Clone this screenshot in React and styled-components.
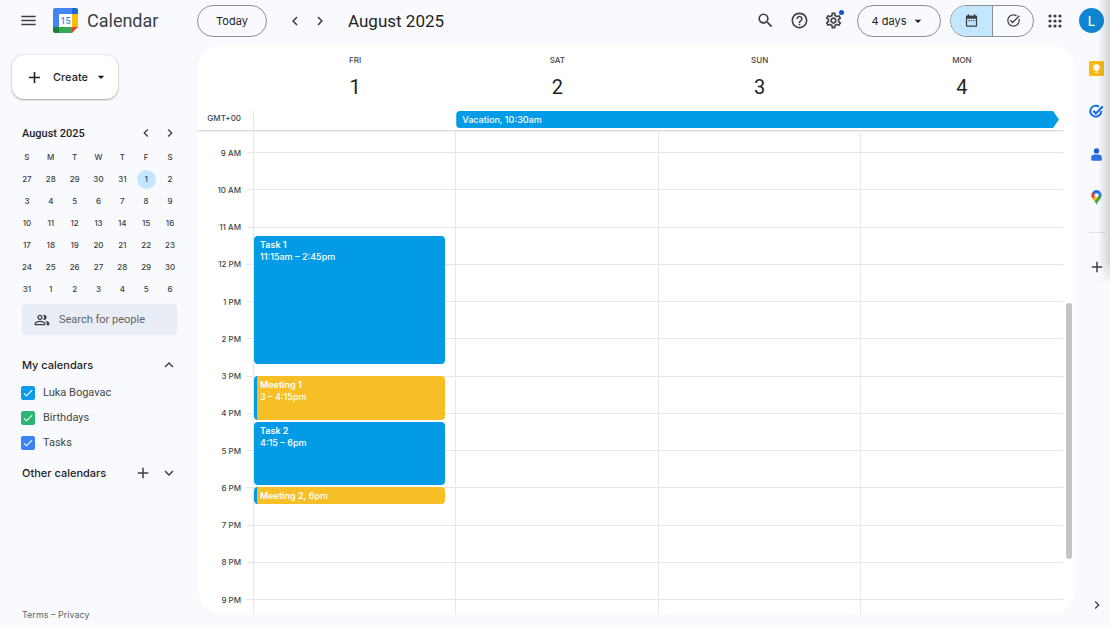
import React, { useState } from "react";
import styled, { createGlobalStyle } from "styled-components";
import {
    MdAdd,
    MdArrowDropDown,
    MdCheck,
    MdChevronLeft,
    MdChevronRight,
    MdDateRange,
    MdExpandLess,
    MdExpandMore,
    MdHelpOutline,
    MdMenu,
    MdOutlinePeopleAlt,
    MdOutlineSettings,
    MdSearch,
    MdTaskAlt,
} from "react-icons/md";

const GlobalStyle = createGlobalStyle`
    * {
        box-sizing: border-box;
    }

    body {
        margin: 0;
        background-color: #f8fafd;
        color: #1f1f1f;
        font-family: Inter, Roboto, "Liberation Sans", sans-serif;
        font-size: 11px;
    }

    button,
    input {
        font: inherit;
        color: inherit;
    }
`;

const Page = styled.div`
    position: relative;
    display: flex;
    flex-direction: column;
    min-height: 100vh;
`;

const Header = styled.header`
    display: flex;
    align-items: center;
    height: 45px;
    padding: 0 6px 4px 0;
`;

const Brand = styled.div`
    display: flex;
    align-items: center;
    width: 197px;
    padding-left: 18px;
`;

const Logo = styled.span`
    display: flex;
    margin-left: 15px;
`;

const BrandName = styled.span`
    margin-left: 9px;
    font-family: Roboto, sans-serif;
    font-size: 18px;
    color: #3c4043;
`;

const IconButton = styled.button`
    display: flex;
    align-items: center;
    justify-content: center;
    flex: none;
    width: ${(props) => props.$size || 24}px;
    height: ${(props) => props.$size || 24}px;
    padding: 0;
    border: none;
    border-radius: 50%;
    background: none;
    color: #3c4043;
    cursor: pointer;

    &:hover {
        background-color: rgba(60, 64, 67, 0.08);
    }
`;

const PillButton = styled.button`
    display: flex;
    align-items: center;
    justify-content: center;
    gap: 4px;
    height: 32px;
    min-width: ${(props) => props.$width}px;
    padding: 0;
    border: 1px solid #8e918f;
    border-radius: 16px;
    background: none;
    cursor: pointer;
`;

const Arrows = styled.div`
    display: flex;
    gap: 1px;
    margin: 0 16px;
`;

const PeriodTitle = styled.h1`
    flex: 1;
    margin: 0;
    font-family: Roboto, sans-serif;
    font-size: 17px;
    font-weight: 400;
`;

const Tools = styled.div`
    display: flex;
    align-items: center;
    gap: 10px;
    margin-right: 12px;
`;

const SettingsButton = styled(IconButton)`
    position: relative;

    &::after {
        content: "";
        position: absolute;
        top: 1px;
        right: 1px;
        width: 5px;
        height: 5px;
        border-radius: 50%;
        background-color: #0b57d0;
    }
`;

const ViewSwitch = styled.div`
    display: flex;
    height: 32px;
    margin: 0 9px;
    border: 1px solid #8e918f;
    border-radius: 16px;
    overflow: hidden;
`;

const ViewOption = styled.button`
    display: flex;
    align-items: center;
    justify-content: center;
    width: 41px;
    padding: 0;
    border: none;
    background-color: ${(props) => (props.$active ? "#c2e7ff" : "transparent")};
    color: #3c4043;
    cursor: pointer;

    & + & {
        border-left: 1px solid #8e918f;
    }
`;

const Avatar = styled.button`
    width: 25px;
    height: 25px;
    margin-left: 12px;
    padding: 0;
    border: none;
    border-radius: 50%;
    background-color: #0f85d1;
    color: white;
    font-size: 13px;
    font-weight: 500;
    cursor: pointer;
`;

const Content = styled.div`
    display: flex;
    flex: 1;
`;

const Sidebar = styled.aside`
    display: flex;
    flex-direction: column;
    flex: none;
    width: 198px;
    padding: 10px 21px 7px 22px;
`;

const CreateButton = styled.button`
    display: flex;
    align-items: center;
    align-self: flex-start;
    height: 44px;
    width: 106px;
    margin: 0 0 24px -10px;
    padding: 0 9px 0 13px;
    border: none;
    border-radius: 12px;
    background-color: white;
    box-shadow: 0 1px 2px rgba(60, 64, 67, 0.4), 0 0 2px rgba(60, 64, 67, 0.2);
    font-weight: 500;
    cursor: pointer;

    & span {
        flex: 1;
        margin-left: 9px;
        text-align: left;
    }
`;

const MiniHeader = styled.div`
    display: flex;
    align-items: center;
    height: 20px;
    margin-right: -5px;

    & h2 {
        flex: 1;
        margin: 0;
        font-family: Roboto, sans-serif;
        font-size: 11px;
        font-weight: 500;
    }
`;

const MiniTable = styled.table`
    width: 167px;
    margin: 3px 0 4px -7px;
    border-collapse: collapse;
    table-layout: fixed;
    font-size: 8px;
    text-align: center;
    color: #3c4043;

    & th,
    & td {
        height: 22px;
        padding: 0;
        font-weight: 500;
    }
`;

const MiniDay = styled.button`
    display: block;
    width: 19px;
    height: 19px;
    margin: 0 auto;
    padding: 0;
    border: none;
    border-radius: 50%;
    background-color: ${(props) => (props.$today ? "#c2e7ff" : "transparent")};
    color: ${(props) => (props.$today ? "#004a77" : "inherit")};
    font-weight: 500;
    cursor: pointer;
`;

const PeopleSearch = styled.label`
    display: flex;
    align-items: center;
    gap: 9px;
    height: 31px;
    padding: 0 12px;
    border-radius: 3px;
    background-color: #e9eef6;
    color: #3c4043;

    & svg {
        flex: none;
    }

    & input {
        width: 100%;
        min-width: 0;
        padding: 0;
        border: none;
        outline: none;
        background: none;
        font-family: Roboto, sans-serif;
    }

    & input::placeholder {
        color: #5f6368;
        opacity: 1;
    }
`;

const SectionHeader = styled.div`
    display: flex;
    align-items: center;
    gap: 2px;
    height: 24px;
    margin-top: ${(props) => props.$top}px;
    margin-right: -4px;

    & h2 {
        flex: 1;
        margin: 0;
        font-size: 11px;
        font-weight: 500;
    }
`;

const CalendarList = styled.div`
    padding-top: 3px;
`;

const CalendarItem = styled.label`
    display: flex;
    align-items: center;
    gap: 8px;
    height: 25px;
    margin-left: -1px;
    font-family: Roboto, sans-serif;
    color: #444746;
    cursor: pointer;
`;

const CheckWrap = styled.span`
    display: grid;
    place-items: center;
    width: 14px;
    height: 14px;

    & > * {
        grid-area: 1 / 1;
    }

    & input {
        appearance: none;
        width: 14px;
        height: 14px;
        margin: 0;
        border: 1px solid ${(props) => props.$color};
        border-radius: 2px;
    }

    & input:checked {
        background-color: ${(props) => props.$color};
    }

    & svg {
        color: white;
        stroke: white;
        pointer-events: none;
    }
`;

const Legal = styled.footer`
    margin-top: auto;
    font-size: 9px;
    color: #5f6368;

    & a {
        color: inherit;
        text-decoration: none;
    }
`;

const Board = styled.main`
    position: relative;
    display: flex;
    flex-direction: column;
    flex: 1;
    min-width: 0;
    margin-bottom: 13px;
    padding-right: 12px;
    border-radius: 24px;
    background-color: white;
`;

const DaysRow = styled.div`
    display: grid;
    grid-template-columns: 56px repeat(4, minmax(0, 1fr));
`;

const DayHeads = styled(DaysRow)`
    height: 66px;
    padding-top: 9px;
    text-align: center;
`;

const DayName = styled.div`
    font-size: 8px;
    line-height: 12px;
    font-weight: 500;
    color: #444746;
`;

const DayNumber = styled.div`
    margin-top: 8px;
    font-family: Roboto, sans-serif;
    font-size: 20px;
    line-height: 26px;
`;

const AllDay = styled(DaysRow)`
    height: 20px;
    border-bottom: 1px solid #dadce0;
    box-shadow: 0 1px 1px rgba(60, 64, 67, 0.08);
`;

const Zone = styled.div`
    padding-right: 12px;
    border-right: 1px solid #e4e8ee;
    font-size: 8px;
    line-height: 15px;
    font-weight: 500;
    text-align: right;
    color: #444746;
    white-space: nowrap;
`;

const AllDayEvent = styled.button`
    grid-column: 3 / -1;
    height: 17px;
    margin: 0 4px 0 0;
    padding: 0 6px;
    border: none;
    border-radius: 4px 0 0 4px;
    background-color: #039be5;
    clip-path: polygon(0 0, calc(100% - 6px) 0, 100% 50%, calc(100% - 6px) 100%, 0 100%);
    color: white;
    font-size: 9px;
    font-weight: 500;
    text-align: left;
    cursor: pointer;
`;

const Hours = styled(DaysRow)`
    flex: 1;
`;

/* quarter-hour rows: a cut-off hour on top, 9 AM to 9 PM, then the rest of the evening */
const quarterRows = "21px repeat(48, minmax(0, 1fr)) 15px";

const Gutter = styled.div`
    display: grid;
    grid-template-rows: ${quarterRows};
    border-right: 1px solid #e4e8ee;
`;

const HourLabel = styled.div`
    grid-row: ${(props) => props.$row} / span 1;
    display: flex;
    align-items: center;
    justify-content: flex-end;
    gap: 6px;
    height: 1px;
    font-size: 8px;
    font-weight: 500;
    color: #444746;
    white-space: nowrap;

    &::after {
        content: "";
        width: 6px;
        height: 1px;
        background-color: #e4e8ee;
    }
`;

const DayColumn = styled.div`
    display: grid;
    grid-template-rows: ${quarterRows};
    grid-template-columns: minmax(0, 1fr);
    border-right: 1px solid #e4e8ee;

    &:last-child {
        border-right: none;
    }
`;

const HourLine = styled.div`
    grid-row: ${(props) => props.$row} / span 1;
    grid-column: 1;
    border-top: 1px solid #e4e8ee;
`;

const Event = styled.button`
    grid-row: ${(props) => props.$start} / ${(props) => props.$end};
    grid-column: 1;
    z-index: 1;
    display: flex;
    flex-direction: column;
    margin: 0 10px 2px 0;
    padding: 3px 6px 0 ${(props) => (props.$meeting ? 3 : 6)}px;
    border: none;
    border-left: ${(props) => (props.$meeting ? "3px solid #039be5" : "none")};
    border-radius: 4px;
    background-color: ${(props) => (props.$meeting ? "#f6bf26" : "#039be5")};
    color: white;
    font-size: 9px;
    font-weight: 500;
    line-height: 12px;
    text-align: left;
    cursor: pointer;

    & strong {
        font-weight: 600;
    }
`;

const ScrollThumb = styled.div`
    position: absolute;
    top: calc(45% + 2px);
    right: 3px;
    width: 6px;
    height: 45%;
    border-radius: 3px;
    background-color: #c4c4c4;
`;

const Rail = styled.nav`
    display: flex;
    flex-direction: column;
    align-items: center;
    flex: none;
    width: 35px;
    padding: 11px 0 10px 8px;
`;

const RailList = styled.div`
    display: flex;
    flex-direction: column;
    align-items: center;
    gap: 19px;
    width: 16px;
    margin-bottom: 22px;
    padding-bottom: 23px;
    border-bottom: 1px solid #dfe3e8;
`;

const RailEnd = styled.div`
    margin-top: auto;
`;

const EdgeShade = styled.div`
    position: absolute;
    top: 0;
    right: 0;
    width: 12px;
    height: 284px;
    background: linear-gradient(to right, rgba(60, 64, 67, 0), rgba(60, 64, 67, 0.2));
    mask-image: linear-gradient(to bottom, black 92%, transparent);
    pointer-events: none;
`;

const days = [
    { name: "FRI", number: 1 },
    { name: "SAT", number: 2 },
    { name: "SUN", number: 3 },
    { name: "MON", number: 4 },
];

const hours = [
    "9 AM",
    "10 AM",
    "11 AM",
    "12 PM",
    "1 PM",
    "2 PM",
    "3 PM",
    "4 PM",
    "5 PM",
    "6 PM",
    "7 PM",
    "8 PM",
    "9 PM",
];

const events = [
    { day: 1, title: "Task 1", time: "11:15am – 2:45pm", start: 11.25, end: 14.75 },
    { day: 1, title: "Meeting 1", time: "3 – 4:15pm", start: 15, end: 16.25, meeting: true },
    { day: 1, title: "Task 2", time: "4:15 – 6pm", start: 16.25, end: 18 },
    { day: 1, title: "Meeting 2", time: "6pm", start: 18, end: 18.5, meeting: true },
];

const weekDays = ["S", "M", "T", "W", "T", "F", "S"];

const weeks = [
    [27, 28, 29, 30, 31, 1, 2],
    [3, 4, 5, 6, 7, 8, 9],
    [10, 11, 12, 13, 14, 15, 16],
    [17, 18, 19, 20, 21, 22, 23],
    [24, 25, 26, 27, 28, 29, 30],
    [31, 1, 2, 3, 4, 5, 6],
];

const toRow = (hour) => 2 + (hour - 9) * 4;

const CalendarLogo = () => (
    <svg width="25" height="25" viewBox="0 0 25 25" aria-hidden="true">
        <path fill="#4285f4" d="M2 0h17v6H6v13H0V2a2 2 0 0 1 2-2z" />
        <path fill="#1967d2" d="M19 0h4a2 2 0 0 1 2 2v4h-6z" />
        <path fill="#fbbc04" d="M19 6h6v13h-6z" />
        <path fill="#34a853" d="M6 19h13v6H6z" />
        <path fill="#188038" d="M0 19h6v6H2a2 2 0 0 1-2-2z" />
        <path fill="#ea4335" d="M19 19h6l-6 6z" />
        <path fill="#fff" d="M6 6h13v13H6z" />
        <text
            x="12.5"
            y="16"
            textAnchor="middle"
            fontSize="9"
            fontWeight="500"
            fontFamily="Roboto, sans-serif"
            fill="#4285f4"
        >
            15
        </text>
    </svg>
);

const AppsIcon = () => (
    <svg width="14" height="14" viewBox="0 0 14 14" fill="currentColor" aria-hidden="true">
        {[2, 7, 12].map((y) => [2, 7, 12].map((x) => <circle key={`${x}-${y}`} cx={x} cy={y} r="1.6" />))}
    </svg>
);

const KeepIcon = () => (
    <svg width="15" height="15" viewBox="0 0 15 15" aria-hidden="true">
        <rect width="15" height="15" rx="1.5" fill="#f9bb12" />
        <circle cx="7.5" cy="6.4" r="3.1" fill="#fff" />
        <path fill="#fff" d="M6 8.5h3v1.8H6zM6.2 10.9h2.6v1H6.2z" />
    </svg>
);

const TasksIcon = () => (
    <svg width="15" height="15" viewBox="0 0 15 15" fill="none" aria-hidden="true">
        <path stroke="#1a6df0" strokeWidth="2" d="M10 2.7A5.500 5.500 0 1 0 12.300 7" />
        <path stroke="#1a6df0" strokeWidth="2.200" d="M4.300 6.900l2.600 2.500 6.800-6.900" />
    </svg>
);

const ContactsIcon = () => (
    <svg width="15" height="15" viewBox="0 0 15 15" aria-hidden="true">
        <circle cx="7.5" cy="3.9" r="2.7" fill="#1a5fd0" />
        <path
            fill="#2a72e5"
            d="M2.2 10.6c0-1.8 1.3-3 3-3h4.6c1.7 0 3 1.2 3 3v2c0 .8-.5 1.2-1.2 1.2H3.4c-.7 0-1.2-.4-1.2-1.2z"
        />
    </svg>
);

const MapsIcon = () => (
    <svg width="15" height="15" viewBox="0 0 15 15" aria-hidden="true">
        <clipPath id="pin">
            <path d="M7.5.3a5 5 0 0 1 5 5c0 3.4-3.5 4.7-5 9.400-1.500-4.700-5-6-5-9.400a5 5 0 0 1 5-5z" />
        </clipPath>
        <g clipPath="url(#pin)">
            <path fill="#34a853" d="M0 0h15v15H0z" />
            <path fill="#fbbc04" d="M0 11L7.5 5 10 7 4 13z" />
            <path fill="#ea4335" d="M0 0h4l3.5 5L2 10 0 8z" />
            <path fill="#1a73e8" d="M3.5 0H15L7.5 5.5 3.7 2.4z" />
            <path fill="#4285f4" d="M11 1l4 2-5 6-2.5-4z" />
            <path fill="#34a853" d="M12 4l1 3-5 8-2-3z" />
        </g>
        <circle cx="7.5" cy="5.2" r="1.9" fill="#fff" />
    </svg>
);

const railApps = [
    { label: "Keep", Icon: KeepIcon },
    { label: "Tasks", Icon: TasksIcon },
    { label: "Contacts", Icon: ContactsIcon },
    { label: "Maps", Icon: MapsIcon },
];

function App() {
    const [view, setView] = useState("calendar");
    const [calendars, setCalendars] = useState([
        { name: "Luka Bogavac", color: "#109bea", checked: true },
        { name: "Birthdays", color: "#2bb673", checked: true },
        { name: "Tasks", color: "#3b82f6", checked: true },
    ]);

    const toggleCalendar = (name) => {
        setCalendars(calendars.map((item) => (item.name === name ? { ...item, checked: !item.checked } : item)));
    };

    const renderEvents = (day) => {
        return events
            .filter((item) => item.day === day)
            .map((item) => (
                <Event key={item.title} $start={toRow(item.start)} $end={toRow(item.end)} $meeting={item.meeting}>
                    {item.end - item.start < 1 ? (
                        <span>
                            <strong>{item.title},</strong> {item.time}
                        </span>
                    ) : (
                        <>
                            <strong>{item.title}</strong>
                            <span>{item.time}</span>
                        </>
                    )}
                </Event>
            ));
    };

    return (
        <Page>
            <GlobalStyle />
            <Header>
                <Brand>
                    <IconButton $size={20} aria-label="Main menu">
                        <MdMenu size={19} />
                    </IconButton>
                    <Logo>
                        <CalendarLogo />
                    </Logo>
                    <BrandName>Calendar</BrandName>
                </Brand>
                <PillButton $width={70}>Today</PillButton>
                <Arrows>
                    <IconButton aria-label="Previous period">
                        <MdChevronLeft size={18} />
                    </IconButton>
                    <IconButton aria-label="Next period">
                        <MdChevronRight size={18} />
                    </IconButton>
                </Arrows>
                <PeriodTitle>August 2025</PeriodTitle>
                <Tools>
                    <IconButton aria-label="Search">
                        <MdSearch size={19} />
                    </IconButton>
                    <IconButton aria-label="Support">
                        <MdHelpOutline size={19} />
                    </IconButton>
                    <SettingsButton aria-label="Settings">
                        <MdOutlineSettings size={19} />
                    </SettingsButton>
                </Tools>
                <PillButton $width={84}>
                    4 days
                    <MdArrowDropDown size={16} />
                </PillButton>
                <ViewSwitch>
                    <ViewOption
                        aria-label="Calendar view"
                        $active={view === "calendar"}
                        onClick={() => setView("calendar")}
                    >
                        <MdDateRange size={15} />
                    </ViewOption>
                    <ViewOption aria-label="Tasks view" $active={view === "tasks"} onClick={() => setView("tasks")}>
                        <MdTaskAlt size={15} />
                    </ViewOption>
                </ViewSwitch>
                <IconButton aria-label="Apps">
                    <AppsIcon />
                </IconButton>
                <Avatar aria-label="Account">L</Avatar>
            </Header>
            <Content>
                <Sidebar>
                    <CreateButton>
                        <MdAdd size={19} />
                        <span>Create</span>
                        <MdArrowDropDown size={16} />
                    </CreateButton>
                    <MiniHeader>
                        <h2>August 2025</h2>
                        <IconButton aria-label="Previous month">
                            <MdChevronLeft size={16} />
                        </IconButton>
                        <IconButton aria-label="Next month">
                            <MdChevronRight size={16} />
                        </IconButton>
                    </MiniHeader>
                    <MiniTable>
                        <thead>
                            <tr>
                                {weekDays.map((name, index) => (
                                    <th key={index}>{name}</th>
                                ))}
                            </tr>
                        </thead>
                        <tbody>
                            {weeks.map((week, row) => (
                                <tr key={row}>
                                    {week.map((day) => (
                                        <td key={day}>
                                            <MiniDay $today={row === 0 && day === 1}>{day}</MiniDay>
                                        </td>
                                    ))}
                                </tr>
                            ))}
                        </tbody>
                    </MiniTable>
                    <PeopleSearch>
                        <MdOutlinePeopleAlt size={16} />
                        <input type="text" placeholder="Search for people" aria-label="Search for people" />
                    </PeopleSearch>
                    <SectionHeader $top={18}>
                        <h2>My calendars</h2>
                        <IconButton aria-label="Collapse my calendars">
                            <MdExpandLess size={18} />
                        </IconButton>
                    </SectionHeader>
                    <CalendarList>
                        {calendars.map((item) => (
                            <CalendarItem key={item.name}>
                                <CheckWrap $color={item.color}>
                                    <input
                                        type="checkbox"
                                        checked={item.checked}
                                        onChange={() => toggleCalendar(item.name)}
                                    />
                                    {item.checked && <MdCheck size={12} />}
                                </CheckWrap>
                                {item.name}
                            </CalendarItem>
                        ))}
                    </CalendarList>
                    <SectionHeader $top={6}>
                        <h2>Other calendars</h2>
                        <IconButton aria-label="Add other calendars">
                            <MdAdd size={18} />
                        </IconButton>
                        <IconButton aria-label="Expand other calendars">
                            <MdExpandMore size={18} />
                        </IconButton>
                    </SectionHeader>
                    <Legal>
                        <a href="#terms">Terms</a> – <a href="#privacy">Privacy</a>
                    </Legal>
                </Sidebar>
                <Board>
                    <DayHeads>
                        <div />
                        {days.map((day) => (
                            <div key={day.name}>
                                <DayName>{day.name}</DayName>
                                <DayNumber>{day.number}</DayNumber>
                            </div>
                        ))}
                    </DayHeads>
                    <AllDay>
                        <Zone>GMT+00</Zone>
                        <AllDayEvent>Vacation, 10:30am</AllDayEvent>
                    </AllDay>
                    <Hours>
                        <Gutter>
                            {hours.map((label, index) => (
                                <HourLabel key={label} $row={toRow(9 + index)}>
                                    {label}
                                </HourLabel>
                            ))}
                        </Gutter>
                        {days.map((day) => (
                            <DayColumn key={day.name}>
                                {hours.map((label, index) => (
                                    <HourLine key={label} $row={toRow(9 + index)} />
                                ))}
                                {renderEvents(day.number)}
                            </DayColumn>
                        ))}
                    </Hours>
                    <ScrollThumb />
                </Board>
                <Rail>
                    <RailList>
                        {railApps.map(({ label, Icon }) => (
                            <IconButton key={label} aria-label={label}>
                                <Icon />
                            </IconButton>
                        ))}
                    </RailList>
                    <IconButton aria-label="Get add-ons">
                        <MdAdd size={18} />
                    </IconButton>
                    <RailEnd>
                        <IconButton aria-label="Hide side panel">
                            <MdChevronRight size={16} />
                        </IconButton>
                    </RailEnd>
                </Rail>
            </Content>
            <EdgeShade />
        </Page>
    );
}

export default App;
